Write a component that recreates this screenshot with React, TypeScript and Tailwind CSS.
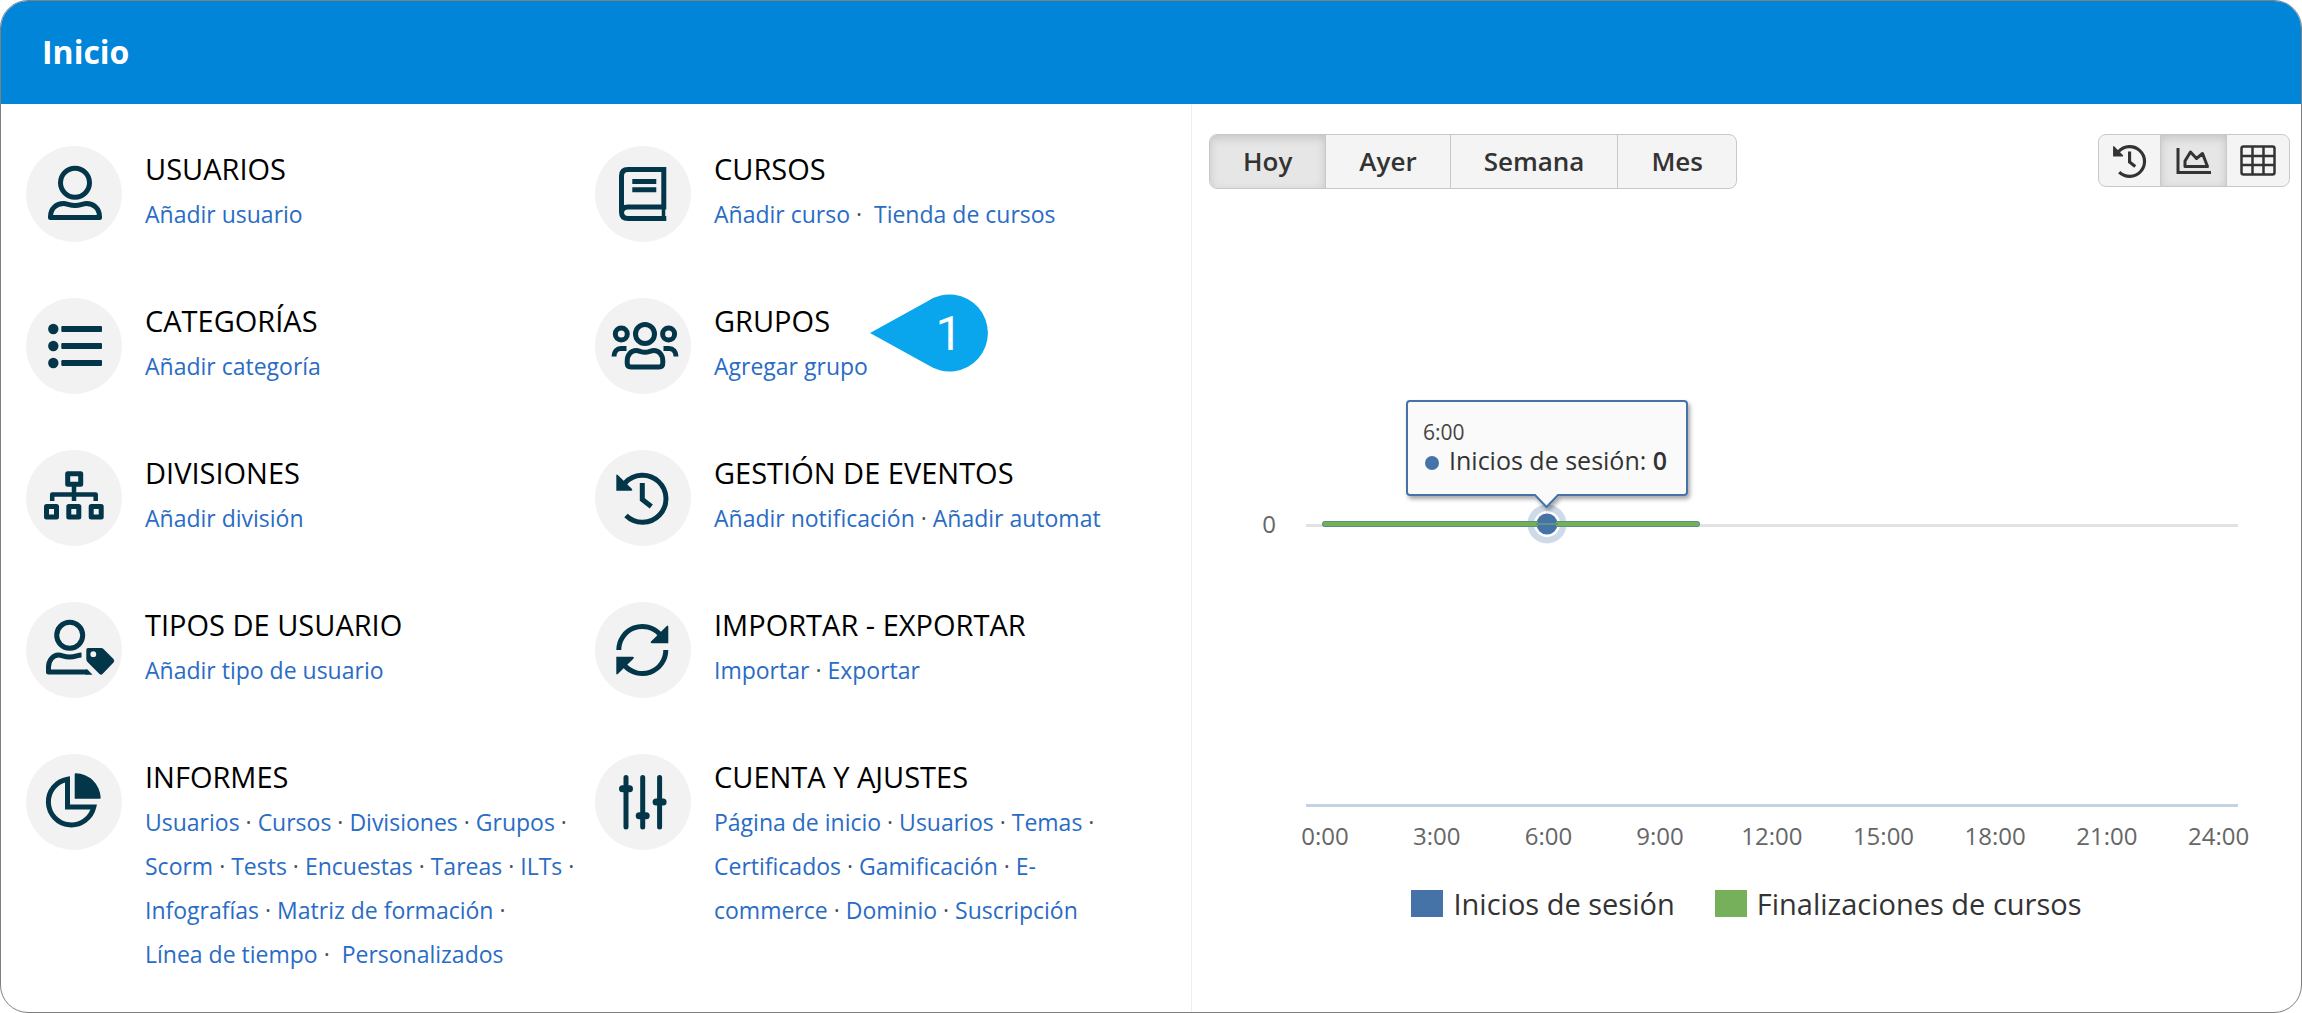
import React, { useState } from 'react';

const UserIcon = () => (
    <g fill="none" stroke="currentColor" strokeWidth="5" strokeLinejoin="round">
        <circle cx="49" cy="36.7" r="14.5" />
        <path d="M24.5 71.5v-1c0-8 6-13 13-13 3.5 0 6 2 11.5 2s8-2 11.5-2c7 0 13 5 13 13v1z" />
    </g>
);

const ListIcon = () => (
    <g fill="currentColor">
        {[31, 48, 65].map((y) => (
            <React.Fragment key={y}>
                <circle cx="27.3" cy={y} r="5.2" />
                <rect x="35.3" y={y - 3} width="40.7" height="6" rx="1" />
            </React.Fragment>
        ))}
    </g>
);

const SitemapIcon = () => (
    <g fill="none" stroke="currentColor" strokeWidth="5" strokeLinejoin="round">
        <rect x="41.7" y="23.7" width="13" height="10.5" />
        <path d="M48 36v15M26.2 51v-6.5h43.5V51" strokeWidth="4.5" />
        <rect x="20.5" y="56.5" width="10" height="10.5" />
        <rect x="42.8" y="56.5" width="10" height="10.5" />
        <rect x="65.2" y="56.5" width="10" height="10.5" />
    </g>
);

const UserTagIcon = () => (
    <g fill="none" stroke="currentColor" strokeWidth="5" strokeLinejoin="round">
        <circle cx="43.7" cy="33.3" r="13" />
        <path d="M55.5 53c-4 0-6 2-11.8 2S36 53 32.5 53c-6 0-10 6-10 12v5H61" />
        <path
            d="M62 46h13q1.5 0 2.5 1l10 10q1.5 2 0 3.5l-11 11.5q-1.5 1.5-3 0L62 60.5q-1.7-1.5-1.7-3.5v-9q0-2 1.7-2zM67.3 49.3a2.9 2.9 0 1 0 0 5.8 2.9 2.9 0 0 0 0-5.8z"
            fill="currentColor"
            fillRule="evenodd"
            stroke="none"
        />
        <path d="M60 67.5h1.5l5 5.3h-7z" fill="currentColor" stroke="none" />
    </g>
);

const PieIcon = () => (
    <g>
        <path d="M41.5 25.2V53H67.8A23 23 0 1 1 41.5 25.2z" fill="none" stroke="currentColor" strokeWidth="5" />
        <path d="M48.7 20.3q0-1 1-1A25.5 25.5 0 0 1 74.7 43.7q0 1-1 1h-25z" fill="currentColor" />
    </g>
);

const BookIcon = () => (
    <g fill="none" stroke="currentColor" strokeWidth="5">
        <path d="M71.3 72.5H33q-6.5 0-6.5-6.5V30q0-6.5 6.5-6.5h35.8V61H33q-6.5 0-6.5 6" />
        <path d="M68.5 61v12" strokeWidth="3.5" />
        <path d="M37.3 35.5h24M37.3 43.8h24" />
    </g>
);

const GroupIcon = () => (
    <g fill="none" stroke="currentColor" strokeWidth="5" strokeLinejoin="round">
        <circle cx="50" cy="36" r="9.5" />
        <circle cx="26.3" cy="36" r="6" />
        <circle cx="73.6" cy="36" r="6" />
        <path d="M36 69q-3.8 0-3.8-4v-2c0-6.5 4-10.5 9-10.5 3 0 5 1.8 8.8 1.8s5.8-1.8 8.8-1.8c5 0 9 4 9 10.5v2q0 4-3.8 4z" />
        <path d="M19 58.5c0-5 3-8 7-8h5.5M81 58.5c0-5-3-8-7-8h-5.5" />
    </g>
);

const HistoryIcon = () => (
    <g>
        <path d="M30 33A23.5 23.5 0 1 1 31 65.5M47.3 33v16.5l9 7" fill="none" stroke="currentColor" strokeWidth="5" />
        <path d="M21.3 25.5q0-1.8 1.5-.6L37 39q1 1.7-.8 1.7H21.3z" fill="currentColor" />
    </g>
);

const SyncIcon = () => (
    <g>
        <path d="M23.8 48A23.5 23.5 0 0 1 65 32.5M70.8 48A23.5 23.5 0 0 1 29.6 63.5" fill="none" stroke="currentColor" strokeWidth="5" />
        <path d="M73.3 24.5q-.3-1.5-1.5-.5L56 39.5q-1 1.8.8 1.8h16.5zM21.3 71.5q.3 1.5 1.5.5l15.8-15.5q1-1.8-.8-1.8H21.3z" fill="currentColor" />
    </g>
);

const SlidersIcon = () => (
    <g fill="none" stroke="currentColor" strokeWidth="5" strokeLinecap="round">
        <path d="M31 23.5V73M47.7 23.5V73M64.6 23.5V73" />
        <path d="M27.5 34.7h7M44.2 61.7h7M61.1 48h7" strokeWidth="7" />
    </g>
);

const sections = [
    { title: 'USUARIOS', icon: UserIcon, links: ['Añadir usuario'] },
    { title: 'CURSOS', icon: BookIcon, links: ['Añadir curso', 'Tienda de cursos'], wide: true },
    { title: 'CATEGORÍAS', icon: ListIcon, links: ['Añadir categoría'] },
    { title: 'GRUPOS', icon: GroupIcon, links: ['Agregar grupo'], step: 1 },
    { title: 'DIVISIONES', icon: SitemapIcon, links: ['Añadir división'] },
    { title: 'GESTIÓN DE EVENTOS', icon: HistoryIcon, links: ['Añadir notificación', 'Añadir automat'] },
    { title: 'TIPOS DE USUARIO', icon: UserTagIcon, links: ['Añadir tipo de usuario'] },
    { title: 'IMPORTAR - EXPORTAR', icon: SyncIcon, links: ['Importar', 'Exportar'] },
    {
        title: 'INFORMES',
        icon: PieIcon,
        links: ['Usuarios', 'Cursos', 'Divisiones', 'Grupos', 'Scorm', 'Tests', 'Encuestas', 'Tareas', 'ILTs', 'Infografías', 'Matriz de formación', 'Línea\u00a0de tiempo', 'Personalizados'],
        wide: true,
    },
    {
        title: 'CUENTA Y AJUSTES',
        icon: SlidersIcon,
        links: ['Página de inicio', 'Usuarios', 'Temas', 'Certificados', 'Gamificación', 'E-commerce', 'Dominio', 'Suscripción'],
    },
];

const periods = ['Hoy', 'Ayer', 'Semana', 'Mes'];
const hours = ['0:00', '3:00', '6:00', '9:00', '12:00', '15:00', '18:00', '21:00', '24:00'];

// Numbered marker that points at a section title
const Callout = ({ step }) => (
    <svg viewBox="0 0 118 78" className="absolute -top-1 left-full ml-10 h-[78px] w-[118px]">
        <path d="M0 39L58 7A38.5 38.5 0 1 1 58 71z" fill="#09a6ee" />
        <text x="79" y="56" textAnchor="middle" fontSize="48" fontWeight="400" fill="#fff" className="font-['Roboto']">{step}</text>
    </svg>
);

const Section = ({ title, icon: Icon, links, wide, step }) => (
    <section className="flex gap-[23px]">
        <svg viewBox="0 0 96 96" className="h-24 w-24 shrink-0 text-[#033649]">
            <circle cx="48" cy="48" r="48" fill="#f2f2f2" />
            <Icon />
        </svg>
        <div className="w-[432px]">
            <h2 className="relative w-fit text-[29px] font-medium leading-[46px] text-black">
                {title}
                {step && <Callout step={step} />}
            </h2>
            <p className="text-[23px] leading-[44px] text-gray-600">
                {links.map((label, i) => (
                    <React.Fragment key={label}>
                        {i > 0 && (wide && i === links.length - 1 ? '\u00a0· \u00a0' : '\u00a0· ')}
                        <a href="#" className="text-[#2a6cc4] hover:underline">{label}</a>
                    </React.Fragment>
                ))}
            </p>
        </div>
    </section>
);

const ActivityChart = () => (
    <svg viewBox="0 0 1109 670" className="block h-auto w-full font-['Open_Sans']">
        <defs>
            <filter id="tipShadow" x="-10%" y="-10%" width="120%" height="130%">
                <feDropShadow dx="2" dy="3" stdDeviation="2" floodColor="#000" floodOpacity="0.35" />
            </filter>
        </defs>
        <path d="M114 325.5H1046" stroke="#e2e2e2" strokeWidth="3" />
        <path d="M114 605.5H1046" stroke="#c3d2e6" strokeWidth="3" />
        <text x="77" y="333" textAnchor="middle" fontSize="24" fill="#666">0</text>
        {hours.map((hour, i) => (
            <text key={hour} x={133 + i * 111.7} y="645" textAnchor="middle" fontSize="24" fill="#666">{hour}</text>
        ))}

        <circle cx="355" cy="324" r="19.5" fill="#cfdae9" />
        <circle cx="355" cy="324" r="13" fill="#fff" />
        <circle cx="355" cy="324" r="10.5" fill="#4572a7" />
        <path d="M133 324H505" stroke="#5b8f86" strokeWidth="6" strokeLinecap="round" />
        <path d="M133 324H505" stroke="#73b154" strokeWidth="4" strokeLinecap="round" />
        <path d="M346 324h18" stroke="#4572a7" strokeWidth="6" />
        <path d="M344 324h22" stroke="#5d9584" strokeWidth="2" />

        <path
            d="M218 201H492q3 0 3 3V292q0 3-3 3H366l-11.5 12L343 295H218q-3 0-3-3V204q0-3 3-3z"
            fill="#fafafa"
            stroke="#4572a7"
            strokeWidth="2"
            filter="url(#tipShadow)"
        />
        <text x="231" y="240" fontSize="21" fill="#444">6:00</text>
        <circle cx="240" cy="263" r="7" fill="#4572a7" />
        <text x="257" y="270" fontSize="25" fill="#333">
            Inicios de sesión: <tspan fontWeight="600">0</tspan>
        </text>
    </svg>
);

const App = () => {
    const [period, setPeriod] = useState('Hoy');

    return (
        <main className="flex min-h-screen flex-col overflow-hidden rounded-[28px] border border-[#7f7f7f] bg-white font-['Open_Sans',sans-serif]">
            <header className="flex h-[103px] items-center bg-[#0085d9] px-[41px] pb-0.5">
                <h1 className="text-[32px] font-bold text-white">Inicio</h1>
            </header>

            <div className="grid grow grid-cols-[1190fr_1110fr]">
                <div className="grid grid-cols-2 content-start gap-y-14 pb-6 pl-[25px] pr-[27px] pt-[42px]">
                    {sections.map((section) => (
                        <Section key={section.title} {...section} />
                    ))}
                </div>

                <div className="border-l border-[#eeeeee] pt-[30px]">
                    <div className="flex items-start justify-between pl-[17px] pr-[11px]">
                        <div className="flex h-[55px] divide-x divide-[#c8c8c8] overflow-hidden rounded-lg border border-[#c8c8c8] bg-[#f4f4f4]">
                            {periods.map((name) => (
                                <button
                                    key={name}
                                    onClick={() => setPeriod(name)}
                                    className={`px-[33px] text-[26px] font-semibold text-[#333] ${name === period ? 'bg-[#e6e6e6] shadow-[inset_0_3px_10px_rgba(0,0,0,0.15)]' : ''}`}
                                >
                                    {name}
                                </button>
                            ))}
                        </div>

                        <div className="flex h-[53px] divide-x divide-[#c8c8c8] overflow-hidden rounded-lg border border-[#c8c8c8] bg-[#f4f4f4] text-[#333]">
                            <button aria-label="Historial" className="flex w-[62px] items-center justify-center">
                                <svg viewBox="18 18 60 60" className="h-[38px] w-[38px]">
                                    <HistoryIcon />
                                </svg>
                            </button>
                            <button aria-label="Gráfico" className="flex w-[66px] items-center justify-center bg-[#e6e6e6] shadow-[inset_0_3px_10px_rgba(0,0,0,0.15)]">
                                <svg viewBox="0 0 36 28" className="h-7 w-9" fill="none" stroke="currentColor" strokeWidth="3">
                                    <path d="M2 1v24.5h33" />
                                    <path d="M9 19.5V14L14.5 5l6 6.5 6-5 5 13z" strokeLinejoin="round" />
                                </svg>
                            </button>
                            <button aria-label="Tabla" className="flex w-[62px] items-center justify-center">
                                <svg viewBox="0 0 36 32" className="h-8 w-9" fill="none" stroke="currentColor" strokeWidth="2.5">
                                    <rect x="1.5" y="1.5" width="33" height="28" rx="2" />
                                    <path d="M12.5 2v27M23.5 2v27M2 11h32M2 20h32" />
                                </svg>
                            </button>
                        </div>
                    </div>

                    <div className="mt-[11px]">
                        <ActivityChart />
                    </div>
                    <div className="mt-3 flex items-center justify-center gap-10 text-[29px] text-[#333]">
                        <span className="flex items-center gap-2.5">
                            <i className="h-[27px] w-8 bg-[#4572a7]" />
                            Inicios de sesión
                        </span>
                        <span className="flex items-center gap-2.5">
                            <i className="h-[27px] w-8 bg-[#77b05b]" />
                            Finalizaciones de cursos
                        </span>
                    </div>
                </div>
            </div>
        </main>
    );
};

export default App;
